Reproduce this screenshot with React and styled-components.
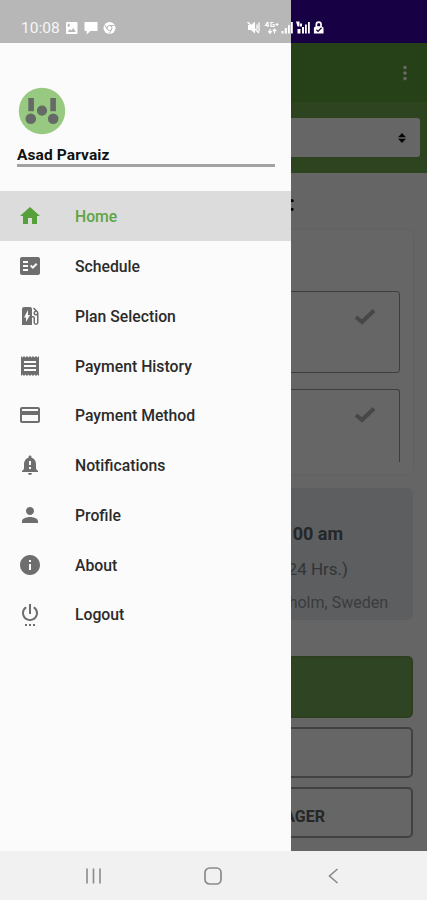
import React, { useState } from 'react';
import styled, { createGlobalStyle } from 'styled-components';
import {
  MdHome,
  MdFactCheck,
  MdEvStation,
  MdReceipt,
  MdPayment,
  MdNotificationImportant,
  MdPerson,
  MdInfo,
  MdSettingsPower,
  MdMoreVert,
} from 'react-icons/md';

const GlobalStyle = createGlobalStyle`
  * {
    box-sizing: border-box;
  }
  body {
    margin: 0;
    font-family: Roboto, "Liberation Sans", sans-serif;
  }
`

const Phone = styled.div`
position: relative;
display: flex;
flex-direction: column;
width: 427px;
height: 900px;
overflow: hidden;
background: #f1f1f1;
`
const Screen = styled.div`
position: relative;
flex: none;
height: 851px;
overflow: hidden;
background: #fdfdfd;
`
const Scrim = styled.div`
position: absolute;
inset: 0;
background: rgba(0, 0, 0, 0.6);
`

const StatusSpace = styled.div`
height: 43px;
background: #3a00a8;
`
const AppBar = styled.div`
display: flex;
align-items: center;
justify-content: flex-end;
height: 59px;
padding-right: 11px;
background: #5fa03a;
color: #fff;
font-size: 24px;
`
const FilterBar = styled.div`
height: 71px;
padding: 16px 7px;
background: #73a752;
`
const Select = styled.div`
display: flex;
align-items: center;
justify-content: flex-end;
height: 39px;
padding-right: 13px;
border-radius: 3px;
background: #fff;
`
const Body = styled.div`
display: flex;
flex-direction: column;
padding: 0 14px;
`
const Title = styled.div`
height: 57px;
padding: 17px 118px 0 0;
text-align: right;
font-size: 22px;
font-weight: 700;
line-height: 28px;
color: #000;
`
const Card = styled.div`
display: flex;
flex-direction: column;
gap: 16px;
height: 244px;
padding: 61px 13px 12px;
border-radius: 6px;
overflow: hidden;
background: #fff;
box-shadow: 0 0 3px rgba(0, 0, 0, 0.12);
`
const Option = styled.div`
display: flex;
flex: none;
align-items: flex-start;
justify-content: flex-end;
height: ${props => props.cut ? 73 : 82}px;
padding: 16px 23px 0 0;
border: solid 1px #9a9a9a;
border-bottom-width: ${props => props.cut ? 0 : 1}px;
border-radius: ${props => props.cut ? '3px 3px 0 0' : '3px'};
`
const Booking = styled.div`
display: flex;
flex-direction: column;
align-items: flex-end;
height: 132px;
margin-top: 14px;
border-radius: 6px;
background: #e8ebed;
`
const BookingTime = styled.div`
margin-top: 34px;
padding-right: 70px;
font-size: 18px;
font-weight: 700;
line-height: 24px;
color: #59626a;
`
const BookingLength = styled.div`
margin-top: 11px;
padding-right: 65px;
font-size: 17px;
line-height: 24px;
color: #7c858b;
`
const BookingPlace = styled.div`
margin-top: 11px;
padding-right: 25px;
font-size: 16px;
line-height: 22px;
color: #8f989d;
`
const Buttons = styled.div`
display: flex;
flex-direction: column;
gap: 9px;
margin-top: 36px;
`
const Button = styled.div`
display: flex;
align-items: center;
justify-content: flex-end;
height: ${props => props.primary ? 62 : 51}px;
padding: 8px 86px 0 0;
border: solid 2px ${props => props.primary ? '#709f52' : '#a0a2a2'};
border-radius: 5px;
background: ${props => props.primary ? '#76aa55' : '#fff'};
font-size: 16px;
font-weight: 700;
color: #5c6060;
`

const Drawer = styled.div`
position: absolute;
top: 0;
left: 0;
width: 291px;
height: 851px;
padding-top: 43px;
background: linear-gradient(#b7b7b7 43px, #fbfbfb 43px);
`
const Profile = styled.div`
height: 148px;
padding: 44px 16px 0 17px;
`
const Name = styled.div`
height: 32px;
padding-top: 11px;
border-bottom: solid 3px #a2a2a2;
font-size: 15.5px;
font-weight: 700;
line-height: 18px;
letter-spacing: 0.1px;
color: #111;
`
const Item = styled.div`
display: flex;
align-items: center;
height: 49.75px;
padding: 1px 0 0 17.5px;
background: ${props => props.active ? '#dcdcdc' : 'transparent'};
color: ${props => props.active ? '#55a03a' : '#6e6e6e'};
font-size: 24px;
cursor: pointer;
`
const Label = styled.span`
margin-left: 33.5px;
padding-top: 1px;
font-size: 15.75px;
font-weight: 500;
color: ${props => props.active ? '#5fa544' : '#2b2b2b'};
`

const StatusBar = styled.div`
position: absolute;
top: 0;
left: 0;
display: flex;
align-items: center;
justify-content: space-between;
width: 427px;
height: 43px;
padding: 12px 103px 0 21px;
font-size: 15.5px;
color: #f6f6f6;
`
const StatusGroup = styled.div`
display: flex;
align-items: center;
gap: ${props => props.gap}px;
`
const NavBar = styled.div`
display: flex;
justify-content: space-between;
align-items: center;
height: 49px;
padding: 1px 85.5px 0 84.5px;
`

const menu = [
  { name: 'Home', icon: MdHome },
  { name: 'Schedule', icon: MdFactCheck },
  { name: 'Plan Selection', icon: MdEvStation },
  { name: 'Payment History', icon: MdReceipt },
  { name: 'Payment Method', icon: MdPayment },
  { name: 'Notifications', icon: MdNotificationImportant },
  { name: 'Profile', icon: MdPerson },
  { name: 'About', icon: MdInfo },
  { name: 'Logout', icon: MdSettingsPower },
]

function Avatar() {
  return (
    <svg width="48" height="48" viewBox="0 0 48 48" style={{ display: 'block' }}>
      <circle cx="25" cy="24" r="23.2" fill="#97c980" />
      <g fill="#666a66">
        <rect x="11.3" y="11" width="5.6" height="13.2" />
        <rect x="33.3" y="11" width="5.6" height="13.2" />
        <circle cx="25" cy="23.6" r="5.1" />
        <circle cx="13.8" cy="31.8" r="5.3" />
        <circle cx="36.2" cy="31.8" r="5.3" />
      </g>
    </svg>
  )
}

function Check() {
  return (
    <svg width="22" height="17" viewBox="0 0 22 17">
      <path d="M2 9l6 5L20 2.5" fill="none" stroke="#b2b2b2" strokeWidth="4.2" />
    </svg>
  )
}

function StatusIcons() {
  return (
    <StatusBar>
      <StatusGroup gap={5}>
        <span>10:08</span>
        <svg width="52" height="14" viewBox="0 0 52 14" fill="#fff">
          <path fillRule="evenodd" d="M2 1h9.500a1 1 0 0 1 1 1v10a1 1 0 0 1-1 1H2a1 1 0 0 1-1-1V2a1 1 0 0 1 1-1zM2.700 11h8.200L8.300 7 6.300 9.500 4.800 8zM2.700 2.700v3h2v-3z" />
          <path d="M19.500 1h13v9h-7l-3.800 3.500V10h-2.200z" />
          <circle cx="44.500" cy="7" r="6" />
          <g fill="none" stroke="#b7b7b7" strokeWidth="1">
            <circle cx="44.500" cy="7" r="2.500" />
            <path d="M44.500 4.500h5M42.300 8.200L39.700 4M46.700 8.200l-2.500 4.300" />
          </g>
        </svg>
      </StatusGroup>
      <svg width="78" height="15" viewBox="0 0 78 15" fill="#fff">
        <path d="M2 5h3l4-3.500v12L5 10H2z" />
        <path d="M1.500 2l11.500 11M11 4.500v5M13 2.500v9" stroke="#fff" strokeWidth="1.300" fill="none" />
        <g stroke="#fff" strokeWidth="1.200" fill="none">
          <path d="M21.500 2l-2 3.500H23M22 2v5M27.500 2.500H25v4h3v-2h-1.500M29.500 4.500h3M31 3v3" />
          <path d="M24 9v4M22.300 11.200l1.700 2 1.700-2M28.500 13.500v-4M26.800 11.200l1.700-2 1.700 2" />
        </g>
        <path d="M35.500 11h2v2.500h-2zM38.800 8h2v5.500h-2zM42 5h1.800v8.500H42zM45 2h1.800v11.500H45z" />
        <path d="M50 1.500h3.500v5h-2zM54 3.500h2v3h-2zM51.500 9h3v4.500h-3zM56 7h2v6.500h-2zM59 4.500h1.800v9H59zM62 2h1.800v11.500H62z" />
        <path fillRule="evenodd" d="M69.500 6.500V4.500a3.200 3.200 0 0 1 6.400 0v2l1.600 1V13.500h-9.600V7.500zM71.200 6.300h3V4.500a1.500 1.500 0 0 0-3 0zM70 10.200l2 2 4-4-.9-.9-3.100 3.100-1.100-1.100z" />
      </svg>
    </StatusBar>
  )
}

function HomePage() {
  return (
    <div>
      <StatusSpace />
      <AppBar><MdMoreVert size={22} /></AppBar>
      <FilterBar>
        <Select>
          <svg width="10" height="12" viewBox="0 0 10 12" fill="#111">
            <path d="M1 5.200L5 1l4 4.200zM1 6.800L5 11l4-4.200z" />
          </svg>
        </Select>
      </FilterBar>
      <Body>
        <Title>:</Title>
        <Card>
          <Option><Check /></Option>
          <Option cut><Check /></Option>
        </Card>
        <Booking>
          <BookingTime>00 am</BookingTime>
          <BookingLength>24 Hrs.)</BookingLength>
          <BookingPlace>holm, Sweden</BookingPlace>
        </Booking>
        <Buttons>
          <Button primary />
          <Button />
          <Button>AGER</Button>
        </Buttons>
      </Body>
    </div>
  )
}

function App() {
  const [page, setPage] = useState('Home')

  const listItems = menu.map(({ name, icon: Icon }) => {
    return (
      <Item key={name} active={page === name ? 1 : 0} onClick={() => setPage(name)}>
        <Icon />
        <Label active={page === name ? 1 : 0}>{name}</Label>
      </Item>
    )
  })

  return (
    <Phone>
      <GlobalStyle />
      <Screen>
        <HomePage />
        <Scrim />
        <Drawer>
          <Profile>
            <Avatar />
            <Name>Asad Parvaiz</Name>
          </Profile>
          {listItems}
        </Drawer>
        <StatusIcons />
      </Screen>
      <NavBar>
        <svg width="17" height="18" viewBox="0 0 17 18" stroke="#8a8a8a" strokeWidth="1.600">
          <path d="M2 1.500v15M8.500 1.500v15M15 1.500v15" />
        </svg>
        <svg width="20" height="20" viewBox="0 0 20 20" fill="none" stroke="#8a8a8a" strokeWidth="1.700">
          <rect x="2" y="2" width="16" height="16" rx="4.500" />
        </svg>
        <svg width="17" height="18" viewBox="0 0 17 18" fill="none" stroke="#8a8a8a" strokeWidth="1.600">
          <path d="M12.500 2l-8 7 8 7" />
        </svg>
      </NavBar>
    </Phone>
  )
}
export default App;
